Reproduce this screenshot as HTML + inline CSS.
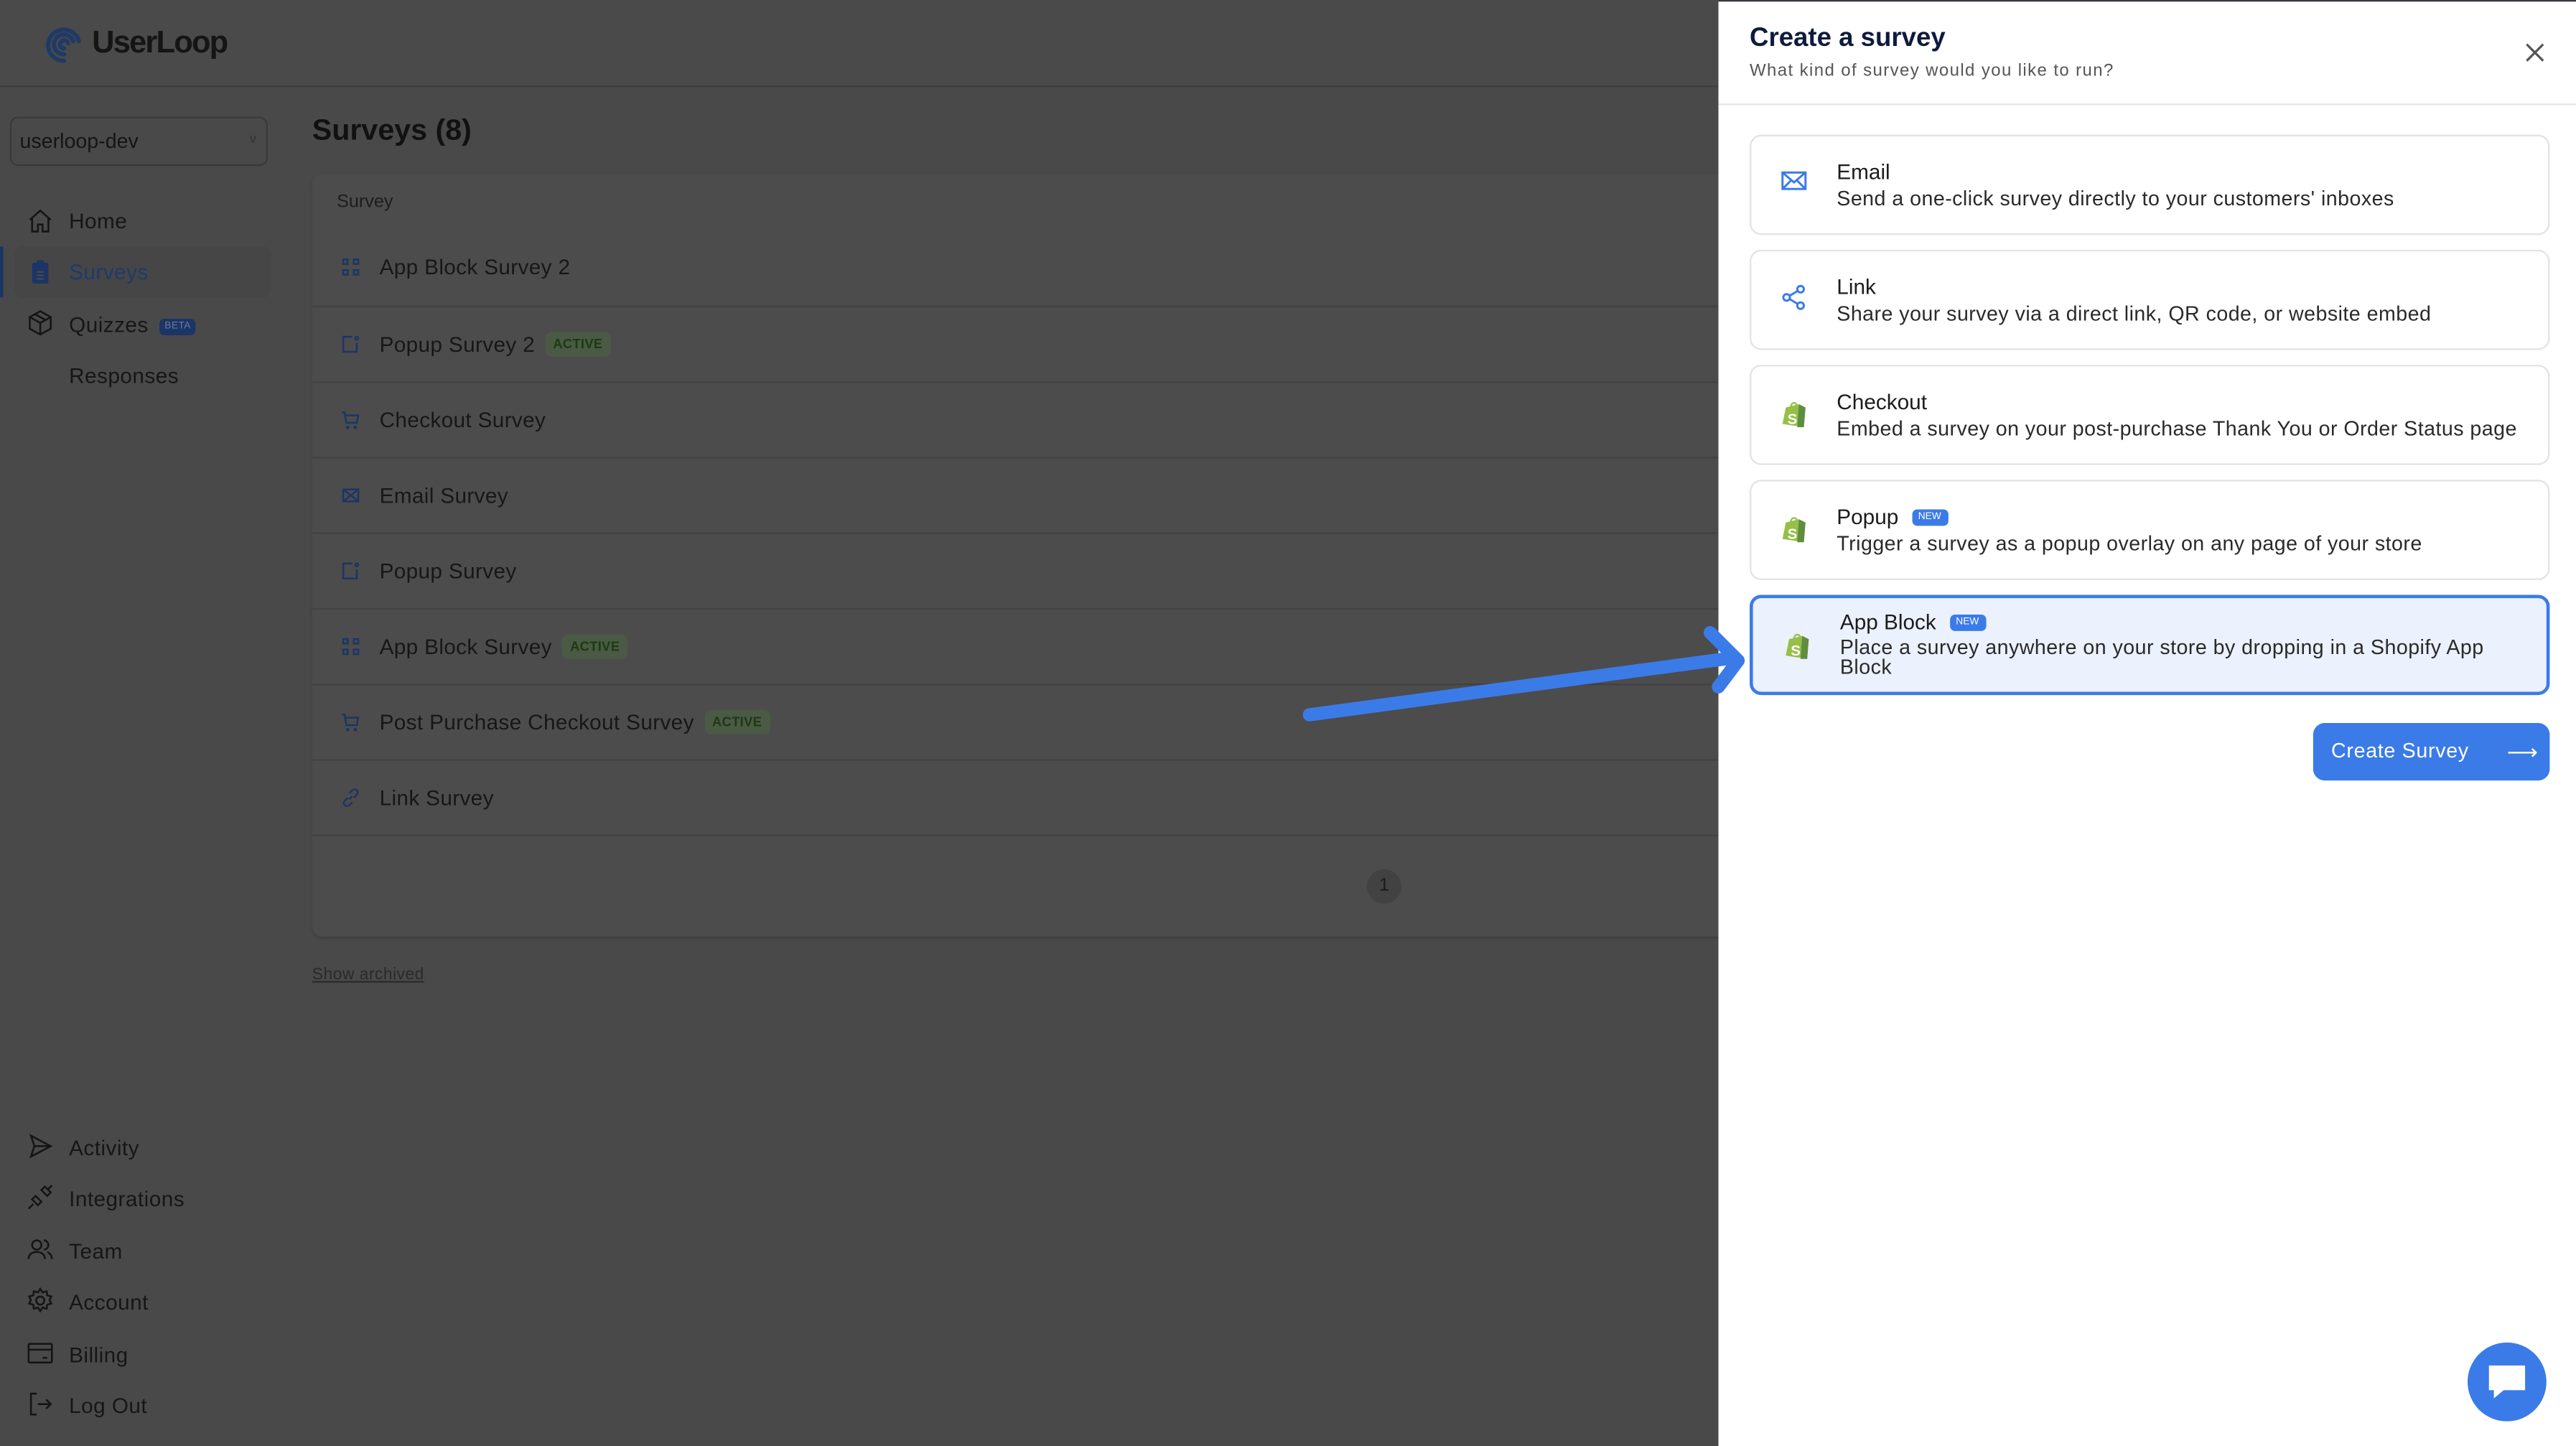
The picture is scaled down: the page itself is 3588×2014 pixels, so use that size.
<!DOCTYPE html>
<html><head><meta charset="utf-8"><style>
*{box-sizing:border-box;margin:0;padding:0}
html,body{width:3588px;height:2014px;overflow:hidden;background:#494949}
#s{position:absolute;left:0;top:0;width:1568px;height:880px;transform:scale(2.28827,2.28864);transform-origin:0 0;font-family:"Liberation Sans",sans-serif;color:#151515}
.a{position:absolute}
.nav{position:absolute;left:42px;font-size:13px;color:#161616;letter-spacing:0.2px}
.ic{position:absolute;left:16px}
.row{position:absolute;left:190px;width:856px;height:46px;border-top:1px solid #424242}
.row span.t{position:absolute;left:41px;top:15px;font-size:13px;color:#171717;letter-spacing:0.15px}
.row svg{position:absolute;left:18px;top:17px}
.act{display:inline-block;margin-left:6px;font-size:8px;font-weight:bold;color:#1d3a12;background:#4a5a45;padding:3px 5px;border-radius:4px;vertical-align:2px}
.card{position:absolute;left:1065px;width:487px;height:61px;border:1px solid #e3e3e3;border-radius:7px;background:#fff}
.card .h{position:absolute;left:52px;top:14px;font-size:13px;color:#1c1c1c}
.card .d{position:absolute;left:52px;top:31px;font-size:12.5px;color:#2a2a2a;letter-spacing:0.2px}
.card svg{position:absolute;left:18px;top:20px}
.new{display:inline-block;background:#3b7be8;color:#fff;font-size:6px;padding:2px 4px;border-radius:3px;margin-left:8px;vertical-align:3px}
</style></head><body><div id="s">
<div class="a" style="left:0;top:0;width:1046px;height:53px;background:#4a4a4a;border-bottom:1px solid #3e3e3e"></div>
<svg class="a" style="left:27px;top:15px" width="24" height="24" viewBox="0 0 24 24"><path d="M12 22a9.5 9.5 0 1 1 9-12M12 18a6 6 0 1 1 5.5-8M12 14.5a2.5 2.5 0 1 1 2.4-3.2" fill="none" stroke="#1f3a66" stroke-width="2.6" stroke-linecap="round"/></svg>
<div class="a" style="left:56px;top:16px;font-size:19px;font-weight:bold;color:#151515;letter-spacing:-0.8px">UserLoop</div>
<div class="a" style="left:6px;top:71px;width:157px;height:30px;border:1px solid #3a3a3a;border-radius:5px"></div>
<div class="a" style="left:12px;top:79px;font-size:12.5px">userloop-dev</div>
<div class="a" style="left:152px;top:80px;font-size:8px;color:#333">v</div>
<div class="a" style="left:9px;top:150px;width:156px;height:31px;background:#464646;border-radius:5px"></div>
<div class="a" style="left:0;top:150px;width:2px;height:31px;background:#1c3566"></div>
<svg class="ic" style="top:126px" width="17" height="17" viewBox="0 0 24 24" fill="none" stroke="#151515" stroke-width="1.6"><path d="M3 11l9-8 9 8M5 9v12h5v-6h4v6h5V9"/></svg>
<div class="nav" style="top:127px">Home</div>
<svg class="ic" style="top:157px" width="17" height="17" viewBox="0 0 24 24"><rect x="5" y="4" width="14" height="18" rx="2" fill="#1c3566"/><rect x="9" y="2" width="6" height="4" rx="1" fill="#1c3566"/><path d="M9 12h6M9 15h6M9 18h6" stroke="#4a4a4a" stroke-width="1.4"/></svg>
<div class="nav" style="top:158px;color:#1f3a6b">Surveys</div>
<svg class="ic" style="top:188px" width="17" height="17" viewBox="0 0 24 24" fill="none" stroke="#151515" stroke-width="1.6"><path d="M12 2l9 5v10l-9 5-9-5V7zM3 7l9 5 9-5M12 12v10M7.5 4.5l9 5"/></svg>
<div class="nav" style="top:190px">Quizzes <span style="font-size:6px;background:#1c3566;color:#6a7aa0;padding:2px 3px;border-radius:3px;vertical-align:2px;margin-left:3px">BETA</span></div>
<div class="nav" style="top:221px">Responses</div>
<svg class="ic" style="top:689px" width="17" height="17" viewBox="0 0 24 24" fill="none" stroke="#151515" stroke-width="1.6"><path d="M4 3l17 9-17 9 3-9zM7 12h14"/></svg>
<div class="nav" style="top:691px">Activity</div>
<svg class="ic" style="top:720px" width="17" height="17" viewBox="0 0 24 24" fill="none" stroke="#151515" stroke-width="1.6"><path d="M2 22l4-4M22 2l-4 4M8 11l5 5-3 3-5-5zM13 6l5 5 3-3-5-5z"/></svg>
<div class="nav" style="top:722px">Integrations</div>
<svg class="ic" style="top:752px" width="17" height="17" viewBox="0 0 24 24" fill="none" stroke="#151515" stroke-width="1.6"><circle cx="9" cy="8" r="4"/><path d="M2 20c0-4 3-6 7-6s7 2 7 6M15 4a4 4 0 0 1 0 8M18 14c2 1 4 3 4 6"/></svg>
<div class="nav" style="top:754px">Team</div>
<svg class="ic" style="top:783px" width="17" height="17" viewBox="0 0 24 24" fill="none" stroke="#151515" stroke-width="1.6"><circle cx="12" cy="12" r="3.5"/><path d="M12 2l2 3 3.5-1 .5 3.5 3.5 1-1.5 3 1.5 3-3.5 1-.5 3.5-3.5-1-2 3-2-3-3.5 1-.5-3.5-3.5-1 1.5-3-1.5-3 3.5-1 .5-3.5 3.5 1z"/></svg>
<div class="nav" style="top:785px">Account</div>
<svg class="ic" style="top:815px" width="17" height="17" viewBox="0 0 24 24" fill="none" stroke="#151515" stroke-width="1.6"><rect x="2" y="4" width="20" height="16" rx="1"/><path d="M2 9h20M14 16h4"/></svg>
<div class="nav" style="top:817px">Billing</div>
<svg class="ic" style="top:846px" width="17" height="17" viewBox="0 0 24 24" fill="none" stroke="#151515" stroke-width="1.6"><path d="M9 3H4v18h5M10 12h11M17 8l4 4-4 4"/></svg>
<div class="nav" style="top:848px">Log Out</div>
<div class="a" style="left:190px;top:69px;font-size:18px;font-weight:bold;color:#111">Surveys (8)</div>
<div class="a" style="left:190px;top:106px;width:870px;height:464px;background:#4c4c4c;border-radius:6px;box-shadow:0 1px 2px rgba(0,0,0,.15)"></div>
<div class="a" style="left:205px;top:117px;font-size:11px;color:#1d1d1d">Survey</div>
<div class="row" style="top:140px;border-top:none"><svg width="11" height="11" viewBox="0 0 12 12" fill="none" stroke="#1c3566" stroke-width="1.2"><rect x="1" y="1" width="3" height="3"/><rect x="8" y="1" width="3" height="3"/><rect x="1" y="8" width="3" height="3"/><rect x="8" y="8" width="3" height="3"/></svg><span class="t">App Block Survey 2</span></div>
<div class="row" style="top:186px"><svg width="11" height="11" viewBox="0 0 12 12" fill="none" stroke="#1c3566" stroke-width="1.2"><path d="M7 1H1v10h9V5"/><circle cx="10" cy="2" r="1"/></svg><span class="t">Popup Survey 2<span class="act">ACTIVE</span></span></div>
<div class="row" style="top:232px"><svg width="11" height="11" viewBox="0 0 12 12" fill="none" stroke="#1c3566" stroke-width="1.2"><path d="M0 1h2l1 7h7l1-5H3"/><circle cx="4" cy="11" r=".6"/><circle cx="9" cy="11" r=".6"/></svg><span class="t">Checkout Survey</span></div>
<div class="row" style="top:278px"><svg width="11" height="11" viewBox="0 0 12 12" fill="none" stroke="#1c3566" stroke-width="1.2"><rect x="1" y="2" width="10" height="8"/><path d="M1 2l10 8M11 2L1 10"/></svg><span class="t">Email Survey</span></div>
<div class="row" style="top:324px"><svg width="11" height="11" viewBox="0 0 12 12" fill="none" stroke="#1c3566" stroke-width="1.2"><path d="M7 1H1v10h9V5"/><circle cx="10" cy="2" r="1"/></svg><span class="t">Popup Survey</span></div>
<div class="row" style="top:370px"><svg width="11" height="11" viewBox="0 0 12 12" fill="none" stroke="#1c3566" stroke-width="1.2"><rect x="1" y="1" width="3" height="3"/><rect x="8" y="1" width="3" height="3"/><rect x="1" y="8" width="3" height="3"/><rect x="8" y="8" width="3" height="3"/></svg><span class="t">App Block Survey<span class="act">ACTIVE</span></span></div>
<div class="row" style="top:416px"><svg width="11" height="11" viewBox="0 0 12 12" fill="none" stroke="#1c3566" stroke-width="1.2"><path d="M0 1h2l1 7h7l1-5H3"/><circle cx="4" cy="11" r=".6"/><circle cx="9" cy="11" r=".6"/></svg><span class="t">Post Purchase Checkout Survey<span class="act">ACTIVE</span></span></div>
<div class="row" style="top:462px"><svg width="11" height="11" viewBox="0 0 12 12" fill="none" stroke="#1c3566" stroke-width="1.2"><path d="M5 7l2-2M4 6L2 8a2 2 0 0 0 3 3l2-2M8 6l2-2a2 2 0 0 0-3-3L5 3"/></svg><span class="t">Link Survey</span></div>
<div class="row" style="top:508px;height:1px"></div>
<div class="a" style="left:832px;top:529px;width:21px;height:21px;border-radius:50%;background:#424242;text-align:center;line-height:21px;font-size:11px;color:#1a1a1a">1</div>
<div class="a" style="left:190px;top:588px;font-size:10px;color:#2a2a2a;text-decoration:underline;letter-spacing:0.2px">Show archived</div>
<div class="a" style="left:1046px;top:0;width:522px;height:880px;background:#fff"></div>
<div class="a" style="left:1046px;top:0;width:522px;height:1px;background:#3a3a40"></div>
<div class="a" style="left:1065px;top:15px;font-size:16px;font-weight:bold;color:#0e1b3d">Create a survey</div>
<div class="a" style="left:1065px;top:37px;font-size:10.5px;color:#555;letter-spacing:0.6px">What kind of survey would you like to run?</div>
<svg class="a" style="left:1537px;top:26px" width="12" height="12" viewBox="0 0 12 12" stroke="#555" stroke-width="1.4"><path d="M1 1l10 10M11 1L1 11"/></svg>
<div class="a" style="left:1046px;top:63px;width:522px;height:1px;background:#e6e6e6"></div>
<div class="card" style="top:82px"><svg width="16" height="14" viewBox="0 0 16 14" fill="none" stroke="#3b7be8" stroke-width="1.3"><rect x="1" y="2" width="14" height="10"/><path d="M1 2l7 6 7-6M1 12l5-5M15 12l-5-5"/></svg><div class="h">Email</div><div class="d">Send a one-click survey directly to your customers' inboxes</div></div>
<div class="card" style="top:152px"><svg width="16" height="16" viewBox="0 0 16 16" fill="none" stroke="#3b7be8" stroke-width="1.3"><circle cx="3.5" cy="8" r="2"/><circle cx="12" cy="3" r="2"/><circle cx="12" cy="13" r="2"/><path d="M5.3 7l5-3M5.3 9l5 3"/></svg><div class="h">Link</div><div class="d">Share your survey via a direct link, QR code, or website embed</div></div>
<div class="card" style="top:222px"><svg width="16" height="18" viewBox="0 0 16 18"><path d="M3 5l8-2 4 2-1 12-13-2z" fill="#95bf47"/><path d="M11 3l4 2-1 12-4 0z" fill="#5e8e3e"/><path d="M6 5c0-3 3-4 4-1" fill="none" stroke="#95bf47" stroke-width="1"/><text x="4" y="15" font-size="9" font-weight="bold" fill="#fff" font-family="Liberation Sans">S</text></svg><div class="h">Checkout</div><div class="d">Embed a survey on your post-purchase Thank You or Order Status page</div></div>
<div class="card" style="top:292px"><svg width="16" height="18" viewBox="0 0 16 18"><path d="M3 5l8-2 4 2-1 12-13-2z" fill="#95bf47"/><path d="M11 3l4 2-1 12-4 0z" fill="#5e8e3e"/><path d="M6 5c0-3 3-4 4-1" fill="none" stroke="#95bf47" stroke-width="1"/><text x="4" y="15" font-size="9" font-weight="bold" fill="#fff" font-family="Liberation Sans">S</text></svg><div class="h">Popup<span class="new">NEW</span></div><div class="d">Trigger a survey as a popup overlay on any page of your store</div></div>
<div class="card" style="top:362px;border:2px solid #3b7be8;background:#ebf1fd"><svg width="16" height="18" viewBox="0 0 16 18" style="left:19px"><path d="M3 5l8-2 4 2-1 12-13-2z" fill="#95bf47"/><path d="M11 3l4 2-1 12-4 0z" fill="#5e8e3e"/><path d="M6 5c0-3 3-4 4-1" fill="none" stroke="#95bf47" stroke-width="1"/><text x="4" y="15" font-size="9" font-weight="bold" fill="#fff" font-family="Liberation Sans">S</text></svg><div class="h" style="left:53px;top:7px">App Block<span class="new">NEW</span></div><div class="d" style="left:53px;top:24px;line-height:12px;width:400px">Place a survey anywhere on your store by dropping in a Shopify App Block</div></div>
<div class="a" style="left:1408px;top:440px;width:144px;height:35px;background:#3b7be8;border-radius:7px"></div>
<div class="a" style="left:1419px;top:450px;font-size:12.5px;color:#fff;letter-spacing:0.3px">Create Survey</div>
<div class="a" style="left:1526px;top:450px;font-size:13px;color:#fff">⟶</div>
<div class="a" style="left:1502px;top:817px;width:48px;height:48px;border-radius:50%;background:#3b7be8"></div>
<svg class="a" style="left:1512px;top:828px" width="28" height="26" viewBox="0 0 28 26"><path d="M3 3h22v15H12l-6 5v-5H3z" fill="#fff"/></svg>
<svg class="a" style="left:0;top:0" width="1568" height="880"><path d="M797 435L1050 401" stroke="#3b7be8" stroke-width="8" stroke-linecap="round"/><path d="M1041 385L1058 402L1046 418" fill="none" stroke="#3b7be8" stroke-width="8" stroke-linecap="round" stroke-linejoin="round"/></svg>
</div></body></html>
